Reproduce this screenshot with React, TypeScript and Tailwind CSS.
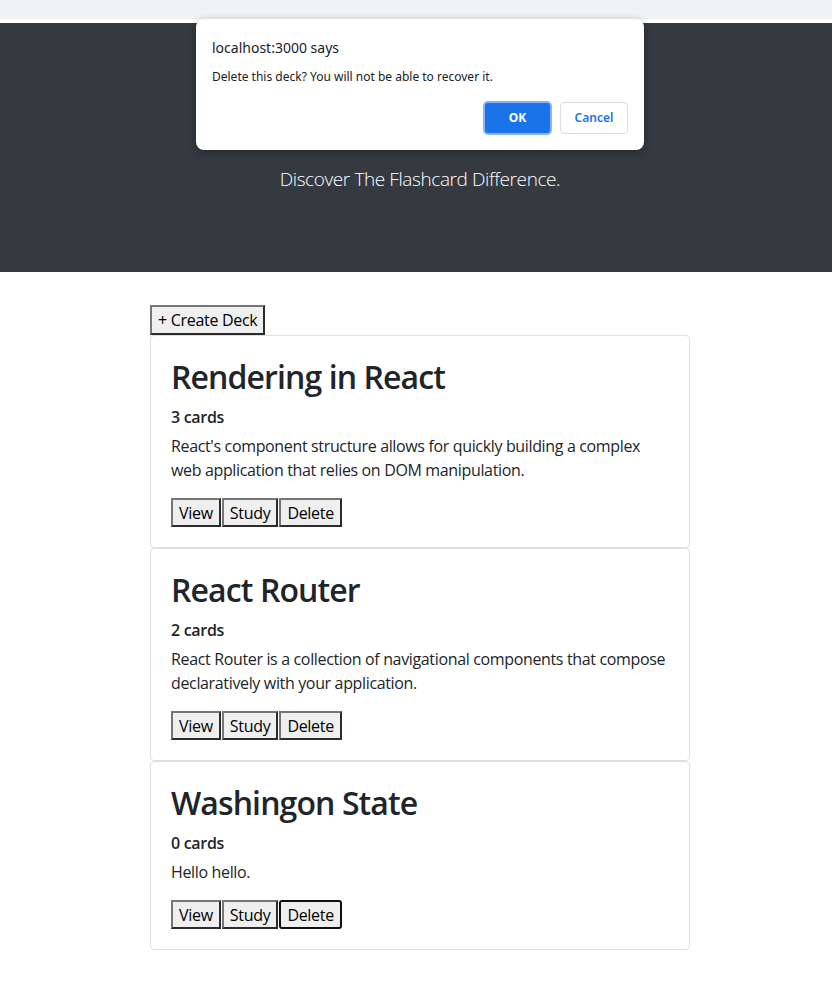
const decks = [
  {
    name: "Rendering in React",
    count: 3,
    description:
      "React's component structure allows for quickly building a complex web application that relies on DOM manipulation.",
  },
  {
    name: "React Router",
    count: 2,
    description:
      "React Router is a collection of navigational components that compose declaratively with your application.",
  },
  {
    name: "Washingon State",
    count: 0,
    description: "Hello hello.",
  },
];

const btn =
  "h-[29px] bg-[#efefef] text-[#000] text-[16px] leading-[22px] px-[6px] tracking-[-0.3px] border-2 border-t-[#767676] border-l-[#767676] border-r-[#2b2b2b] border-b-[#2b2b2b]";

export default function App() {
  return (
    <div className="relative min-h-[982px] bg-white text-[#212529] font-['Segoe_UI','Open_Sans',sans-serif]">
      <div className="h-[19px] bg-[#f1f2f4]" />
      <div className="h-[4px] bg-white" />
      <header className="h-[249px] bg-[#343a40] text-white text-center px-8 pt-[141px]">
        <p className="text-[19px] leading-[30px] font-light tracking-[-0.4px] ml-[8px]">
          Discover The Flashcard Difference.
        </p>
      </header>

      <main className="w-[540px] ml-[150px] mt-[33px] pb-[31px]">
        <button className={btn + " h-[30px]"}>+ Create Deck</button>
        <div className="flex flex-col">
          {decks.map((d, i) => (
            <div key={d.name} className="border border-[#dfdfdf] rounded-[4px] p-5">
              <h2 className="text-[32px] leading-[42px] font-semibold tracking-[-0.9px] mb-[7px]">{d.name}</h2>
              <h6 className="text-[16px] leading-6 font-semibold tracking-[-0.3px] mb-[5px]">{d.count} cards</h6>
              <p className="text-[16px] leading-6 tracking-[-0.35px] mb-4">{d.description}</p>
              <div className="flex gap-px">
                <button className={btn}>View</button>
                <button className={btn}>Study</button>
                <button
                  className={
                    i === 2
                      ? "h-[29px] bg-[#efefef] text-[#000] text-[16px] leading-[22px] px-[6px] tracking-[-0.3px] border-2 border-[#101010] rounded-[3px]"
                      : btn
                  }
                >
                  Delete
                </button>
              </div>
            </div>
          ))}
        </div>
      </main>

      {/* alert dialog */}
      <div className="absolute left-[196px] top-[19px] w-[448px] h-[131px] bg-white rounded-[8px] shadow-[0_2px_8px_rgba(0,0,0,0.3)] px-4 pt-[19px] font-['Segoe_UI','Noto_Sans',sans-serif]">
        <div className="text-[14px] leading-5 text-[#202124]">localhost:3000 says</div>
        <div className="text-[12px] leading-4 text-[#202124] mt-[11px]">
          Delete this deck? You will not be able to recover it.
        </div>
        <div className="flex justify-end gap-[9px] mt-[17px]">
          <button className="w-[67px] h-[32px] rounded-[4px] bg-[#1a73e8] text-white text-[12px] font-bold outline outline-2 outline-[#8ab4f8] outline-offset-[-1px] border border-[#1a73e8]">
            OK
          </button>
          <button className="w-[68px] h-[32px] rounded-[4px] bg-white text-[#1a73e8] text-[12px] font-semibold border border-[#dadce0]">
            Cancel
          </button>
        </div>
      </div>
    </div>
  );
}
